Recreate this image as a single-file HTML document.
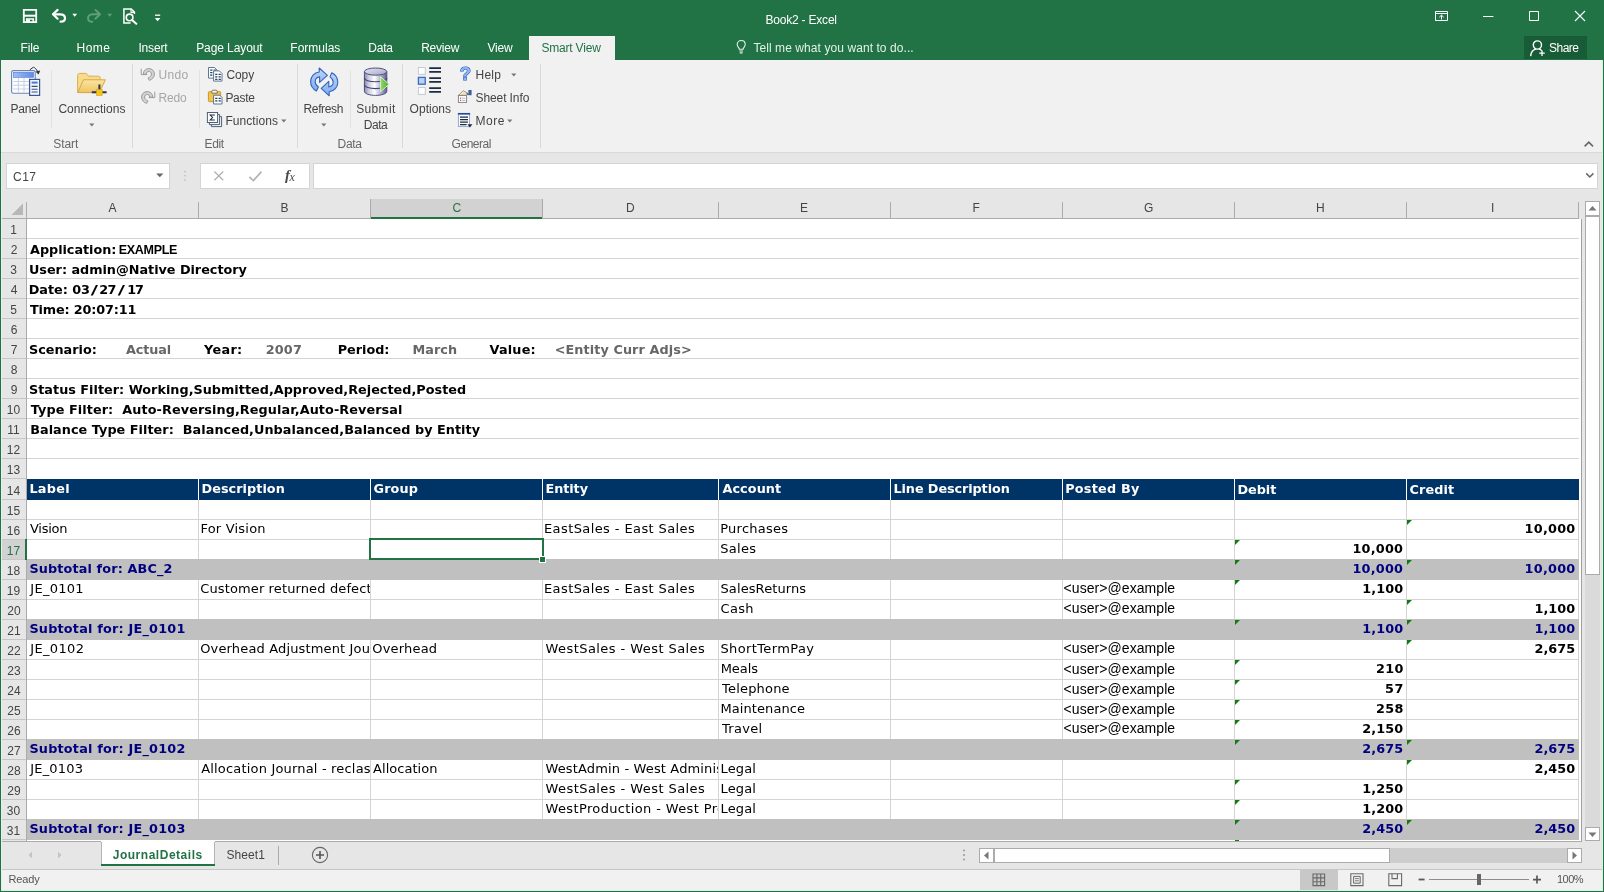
<!DOCTYPE html>
<html lang="en"><head><meta charset="utf-8"><title>Book2 - Excel</title>
<style>
html,body{margin:0;padding:0;background:#e6e6e6;}
#app{position:relative;width:1604px;height:892px;overflow:hidden;background:#e6e6e6;font-family:"Liberation Sans", sans-serif;will-change:transform;}
.r{position:absolute;}
.t{position:absolute;white-space:nowrap;line-height:20px;height:20px;color:#444;font-size:12px;}
.u{font-family:"Liberation Sans", sans-serif;}
.v{font-family:"DejaVu Sans", "Liberation Sans", sans-serif;}
.pre{white-space:pre;}
.tri{position:absolute;width:0;height:0;border-top:5px solid #107c10;border-right:5px solid transparent;}
</style></head>
<body><div id="app">
<div class="r" style="left:0px;top:0px;width:1604px;height:60px;background:#217346;"></div>
<span class="t u" style="left:765.50px;top:10.00px;color:#fff;letter-spacing:-0.208px;">Book2 - Excel</span>
<span class="t u" style="left:20.50px;top:38.00px;color:#fff;letter-spacing:-0.167px;">File</span>
<span class="t u" style="left:76.50px;top:38.00px;color:#fff;letter-spacing:0.500px;">Home</span>
<span class="t u" style="left:138.40px;top:38.00px;color:#fff;letter-spacing:-0.140px;">Insert</span>
<span class="t u" style="left:196.20px;top:38.00px;color:#fff;letter-spacing:-0.090px;">Page Layout</span>
<span class="t u" style="left:290.30px;top:38.00px;color:#fff;">Formulas</span>
<span class="t u" style="left:368.30px;top:38.00px;color:#fff;letter-spacing:-0.233px;">Data</span>
<span class="t u" style="left:421.20px;top:38.00px;color:#fff;letter-spacing:-0.240px;">Review</span>
<span class="t u" style="left:487.40px;top:38.00px;color:#fff;letter-spacing:-0.133px;">View</span>
<div class="r" style="left:529px;top:36px;width:86px;height:24px;background:#f1f1f1;"></div>
<span class="t u" style="left:541.40px;top:38.00px;color:#217346;letter-spacing:-0.189px;">Smart View</span>
<span class="t u" style="left:753.40px;top:38.00px;color:#e2f1e7;letter-spacing:0.076px;">Tell me what you want to do...</span>
<div class="r" style="left:1524px;top:36px;width:63px;height:23px;background:#185c37;"></div>
<span class="t u" style="left:1549.00px;top:38.00px;color:#fff;letter-spacing:-0.500px;">Share</span>
<svg class="r" style="left:22px;top:8px" width="16" height="16" viewBox="0 0 16 16" ><path d="M1.8 1.8H14.2V14.2H1.8Z" fill="none" stroke="#fff" stroke-width="1.8"/><path d="M1.8 7.7H14.2" stroke="#fff" stroke-width="2"/><path d="M4.7 14.2V11H11.3V14.2" fill="none" stroke="#fff" stroke-width="1.6"/><rect x="5" y="11.4" width="3" height="3" fill="#fff"/></svg>
<svg class="r" style="left:50px;top:7px" width="18" height="17" viewBox="0 0 18 17" ><path d="M3.4 7.3H10.2C13.6 7.3 15 9.3 15 11.2C15 13.2 13.4 14.7 10.6 14.7" fill="none" stroke="#fff" stroke-width="2.2" stroke-linecap="round"/><path d="M7.6 2.9L3 7.3L7.6 11.7" fill="none" stroke="#fff" stroke-width="2.2" stroke-linecap="round" stroke-linejoin="round"/></svg>
<svg class="r" style="left:72px;top:13px" width="6" height="5" viewBox="0 0 6 5" ><path d="M0.3 0.8H5.1L2.7 3.8Z" fill="#fff"/></svg>
<svg class="r" style="left:85px;top:7px" width="18" height="17" viewBox="0 0 18 17" ><path d="M14.6 7.3H7.8C4.4 7.3 3 9.3 3 11.2C3 13.2 4.6 14.7 7.4 14.7" fill="none" stroke="#5f9f7c" stroke-width="1.9" stroke-linecap="round"/><path d="M10.4 2.9L15 7.3L10.4 11.7" fill="none" stroke="#5f9f7c" stroke-width="1.9" stroke-linecap="round" stroke-linejoin="round"/></svg>
<svg class="r" style="left:107px;top:13px" width="6" height="5" viewBox="0 0 6 5" ><path d="M0.3 0.8H5.1L2.7 3.8Z" fill="#5f9f7c"/></svg>
<svg class="r" style="left:122px;top:7px" width="17" height="18" viewBox="0 0 17 18" ><path d="M8.6 15.9H1.9V1.9H9.2L12.4 5.1V7" fill="none" stroke="#fff" stroke-width="1.5"/><path d="M9 2V5.4H12.3" fill="none" stroke="#fff" stroke-width="1.1"/><circle cx="7.6" cy="10.4" r="3.3" fill="none" stroke="#fff" stroke-width="1.6"/><path d="M10 12.9L14.3 16.8" stroke="#fff" stroke-width="2" stroke-linecap="round"/></svg>
<svg class="r" style="left:154px;top:13px" width="8" height="10" viewBox="0 0 8 10" ><path d="M1 2.2H6.2" stroke="#fff" stroke-width="1.3"/><path d="M0.8 5H6.4L3.6 8.2Z" fill="#fff"/></svg>
<svg class="r" style="left:735px;top:39px" width="13" height="16" viewBox="0 0 13 16" ><path d="M4.3 10.3C4.3 8.6 2.2 7.9 2.2 5.4C2.2 3.1 4 1.5 6.2 1.5C8.4 1.5 10.2 3.1 10.2 5.4C10.2 7.9 8.1 8.6 8.1 10.3Z" fill="none" stroke="#e4f1e8" stroke-width="1.1"/><path d="M4.4 12H8M4.8 13.9H7.6" stroke="#e4f1e8" stroke-width="1.1"/></svg>
<svg class="r" style="left:1529px;top:39px" width="19" height="18" viewBox="0 0 19 18" ><circle cx="8.4" cy="6" r="4.1" fill="none" stroke="#fff" stroke-width="1.4"/><path d="M1.7 16.6C2.2 12.6 4.6 10.6 6.6 10.1" fill="none" stroke="#fff" stroke-width="1.4" stroke-linecap="round"/><path d="M10.3 10.1C11 10.3 11.7 10.7 12.3 11.2" fill="none" stroke="#fff" stroke-width="1.4" stroke-linecap="round"/><path d="M13 11.4V17M10.2 14.2H15.8" stroke="#fff" stroke-width="1.3"/></svg>
<svg class="r" style="left:1434px;top:10px" width="15" height="12" viewBox="0 0 15 12" ><path d="M1.5 1.5H13.5V10.5H1.5Z" fill="none" stroke="#fff" stroke-width="1"/><path d="M1.5 3.5H13.5" stroke="#fff" stroke-width="1"/><path d="M7.5 9.5V5.4M5.3 7.2L7.5 5.1L9.7 7.2" fill="none" stroke="#fff" stroke-width="1"/></svg>
<svg class="r" style="left:1483px;top:15px" width="11" height="3" viewBox="0 0 11 3" ><path d="M0 1.5H10.4" stroke="#fff" stroke-width="1"/></svg>
<svg class="r" style="left:1528px;top:10px" width="12" height="12" viewBox="0 0 12 12" ><path d="M1.5 1.5H10.5V10.5H1.5Z" fill="none" stroke="#fff" stroke-width="1"/></svg>
<svg class="r" style="left:1574px;top:10px" width="12" height="12" viewBox="0 0 12 12" ><path d="M1 1L11 11M11 1L1 11" stroke="#fff" stroke-width="1.1"/></svg>
<div class="r" style="left:1px;top:60px;width:1601px;height:92px;background:#f1f1f1;"></div>
<div class="r" style="left:1px;top:152px;width:1601px;height:1px;background:#d9d9d9;"></div>
<div class="r" style="left:132px;top:64px;width:1px;height:84px;background:#d8d8d8;"></div>
<div class="r" style="left:297px;top:64px;width:1px;height:84px;background:#d8d8d8;"></div>
<div class="r" style="left:402px;top:64px;width:1px;height:84px;background:#d8d8d8;"></div>
<div class="r" style="left:540px;top:64px;width:1px;height:84px;background:#d8d8d8;"></div>
<div class="r" style="left:51px;top:70px;width:1px;height:58px;background:#e3e3e3;"></div>
<div class="r" style="left:199px;top:70px;width:1px;height:58px;background:#e3e3e3;"></div>
<div class="r" style="left:350px;top:70px;width:1px;height:58px;background:#e3e3e3;"></div>
<span class="t u" style="left:10.50px;top:99.00px;letter-spacing:-0.200px;">Panel</span>
<span class="t u" style="left:58.40px;top:99.00px;letter-spacing:0.030px;">Connections</span>
<span class="t u" style="left:158.60px;top:65.00px;color:#a6a6a6;letter-spacing:0.267px;">Undo</span>
<span class="t u" style="left:158.60px;top:88.00px;color:#a6a6a6;letter-spacing:-0.200px;">Redo</span>
<span class="t u" style="left:226.40px;top:65.00px;letter-spacing:-0.067px;">Copy</span>
<span class="t u" style="left:225.40px;top:88.00px;letter-spacing:-0.300px;">Paste</span>
<span class="t u" style="left:225.40px;top:111.00px;letter-spacing:0.062px;">Functions</span>
<span class="t u" style="left:303.50px;top:99.00px;letter-spacing:-0.350px;">Refresh</span>
<span class="t u" style="left:356.20px;top:99.00px;letter-spacing:0.360px;">Submit</span>
<span class="t u" style="left:363.70px;top:115.00px;letter-spacing:-0.433px;">Data</span>
<span class="t u" style="left:409.60px;top:99.00px;letter-spacing:0.017px;">Options</span>
<span class="t u" style="left:475.60px;top:65.00px;letter-spacing:0.200px;">Help</span>
<span class="t u" style="left:475.60px;top:88.00px;letter-spacing:-0.111px;">Sheet Info</span>
<span class="t u" style="left:475.60px;top:111.00px;letter-spacing:0.467px;">More</span>
<span class="t u" style="left:53.20px;top:134.00px;color:#666;letter-spacing:-0.050px;">Start</span>
<span class="t u" style="left:204.60px;top:134.00px;color:#666;letter-spacing:-0.433px;">Edit</span>
<span class="t u" style="left:337.60px;top:134.00px;color:#666;letter-spacing:-0.367px;">Data</span>
<span class="t u" style="left:451.60px;top:134.00px;color:#666;letter-spacing:-0.483px;">General</span>
<svg class="r" style="left:9px;top:65px" width="34" height="33" viewBox="0 0 34 33" ><defs><linearGradient id="gbh" x1="0" y1="0" x2="1" y2="0"><stop offset="0" stop-color="#9dbdf6"/><stop offset="1" stop-color="#5f8be6"/></linearGradient><linearGradient id="gfo" x1="0" y1="0" x2="0" y2="1"><stop offset="0" stop-color="#fbe5a2"/><stop offset="1" stop-color="#efc462"/></linearGradient><linearGradient id="gcy" x1="0" y1="0" x2="1" y2="0"><stop offset="0" stop-color="#8585ad"/><stop offset="0.18" stop-color="#c9c9e0"/><stop offset="0.45" stop-color="#ffffff"/><stop offset="0.75" stop-color="#a9a9cc"/><stop offset="1" stop-color="#5e5e92"/></linearGradient><linearGradient id="gct" x1="0" y1="0" x2="1" y2="1"><stop offset="0" stop-color="#e6e6f2"/><stop offset="1" stop-color="#a6a6c8"/></linearGradient><linearGradient id="ggr" x1="0" y1="0" x2="1" y2="0"><stop offset="0" stop-color="#8fd66a"/><stop offset="1" stop-color="#4caf2c"/></linearGradient><linearGradient id="grf" x1="0" y1="0" x2="0" y2="1"><stop offset="0" stop-color="#bdd6fb"/><stop offset="1" stop-color="#7eaaf0"/></linearGradient></defs><rect x="2.6" y="5.6" width="23.6" height="22.6" rx="1.8" fill="#fdfdff" stroke="#6b84b4" stroke-width="1.1"/><rect x="4.4" y="7.3" width="20.2" height="5" fill="url(#gbh)" stroke="#4f78d4" stroke-width="0.6"/><path d="M4.2 16.5H25M4.2 20.2H25M4.2 24H25M9.4 13V27.6M15 13V27.6M20.4 13V27.6" stroke="#c3cde0" stroke-width="0.9" fill="none"/><rect x="20.6" y="14.4" width="10" height="16" fill="#f2f6ff" stroke="#3a5792" stroke-width="1.2"/><rect x="22.6" y="16.6" width="6" height="2" fill="#4a77d8"/><path d="M22.6 21.4H28.6M22.6 24.2H28.6M22.6 27H28.6" stroke="#3d4f74" stroke-width="1.1"/><path d="M20.8 4.8L24.4 2.2C25.6 2.4 27 3.6 29 7" fill="none" stroke="#27344d" stroke-width="1"/><path d="M26.4 6.6L31.2 5.6L29.6 9.6Z" fill="#27344d"/></svg>
<svg class="r" style="left:75px;top:70px" width="34" height="28" viewBox="0 0 34 28" ><path d="M2.6 5.4C2.6 4.2 3.4 3.4 4.6 3.4H10.6C11.6 3.4 12 3.8 12.6 4.8L13.4 6.2H23.4C24.6 6.2 25.2 6.8 25.2 8V22.4H2.6Z" fill="#f7dc8a" stroke="#dcae55" stroke-width="1"/><path d="M8.4 9.8H30.4L24.4 22.6H2.8Z" fill="url(#gfo)" stroke="#d9a748" stroke-width="1"/><path d="M24.4 14.4V20.6M16.8 22.3H31.6" stroke="#2b3647" stroke-width="2"/><rect x="21.6" y="19.6" width="5.6" height="6" fill="#f2c41c" stroke="#d8a810" stroke-width="0.6"/></svg>
<svg class="r" style="left:89px;top:123px" width="6" height="4" viewBox="0 0 6 4" ><path d="M0.2 0.4H5.4L2.8 3.4Z" fill="#777"/></svg>
<svg class="r" style="left:140px;top:67px" width="16" height="15" viewBox="0 0 16 15" ><path d="M1.2 1.8V7.6H7.2" fill="none" stroke="#9a9a9a" stroke-width="1"/><path d="M3.4 7.2C3.2 3.6 6 1.6 8.8 1.6C12 1.6 14.4 4 14.4 7C14.4 10.2 12 12.6 9.4 13.4L8 11C10 10.4 11.4 9 11.4 7C11.4 5.4 10.2 4.4 8.8 4.4C7.4 4.4 6.2 5.4 6.4 7.2Z" fill="#d4d4d4" stroke="#9a9a9a" stroke-width="1" stroke-linejoin="round"/></svg>
<svg class="r" style="left:140px;top:90px" width="16" height="15" viewBox="0 0 16 15" ><path d="M14.8 1.8V7.6H8.8" fill="none" stroke="#9a9a9a" stroke-width="1"/><path d="M12.6 7.2C12.8 3.6 10 1.6 7.2 1.6C4 1.6 1.6 4 1.6 7C1.6 10.2 4 12.6 6.6 13.4L8 11C6 10.4 4.6 9 4.6 7C4.6 5.4 5.8 4.4 7.2 4.4C8.6 4.4 9.8 5.4 9.6 7.2Z" fill="#d4d4d4" stroke="#9a9a9a" stroke-width="1" stroke-linejoin="round"/></svg>
<svg class="r" style="left:207px;top:66px" width="16" height="16" viewBox="0 0 16 16" ><path d="M1.5 1.5H7.5L10.1 4.1V12.1H1.5Z" fill="#fcfdff" stroke="#5d7893" stroke-width="1"/><path d="M3.2 4.2h2.2M6.6 4.2h2.2" stroke="#2d3c55" stroke-width="1.2"/><path d="M3.2 6.7h2.2M6.6 6.7h2.2" stroke="#2d3c55" stroke-width="1.2"/><path d="M3.2 9.2h2.2M6.6 9.2h2.2" stroke="#2d3c55" stroke-width="1.2"/><path d="M6.6 4.9H12.4L15 7.5V15.1H6.6Z" fill="#fcfdff" stroke="#5d7893" stroke-width="1"/><path d="M8.2 8.4h2.2M11.6 8.4h2.2" stroke="#2d3c55" stroke-width="1.2"/><path d="M8.2 10.9h2.2M11.6 10.9h2.2" stroke="#2d3c55" stroke-width="1.2"/><path d="M8.2 13.4h2.2M11.6 13.4h2.2" stroke="#2d3c55" stroke-width="1.2"/></svg>
<svg class="r" style="left:207px;top:89px" width="16" height="16" viewBox="0 0 16 16" ><rect x="1.4" y="2.6" width="12.2" height="10" rx="1" fill="#f3c54a" stroke="#c9962a" stroke-width="1"/><path d="M4.8 4.2V2.4C4.8 1.6 5.4 1.2 6 1.2H9C9.6 1.2 10.2 1.6 10.2 2.4V4.2Z" fill="#f4f4f4" stroke="#7a6a45" stroke-width="0.9"/><path d="M6.6 6.2H12.8L15 8.4V15H6.6Z" fill="#fcfdff" stroke="#5d7893" stroke-width="1"/><path d="M8.2 9.4h2.2M11.6 9.4h2.2" stroke="#2d3c55" stroke-width="1.2"/><path d="M8.2 11.9h2.2M11.6 11.9h2.2" stroke="#2d3c55" stroke-width="1.2"/></svg>
<svg class="r" style="left:206px;top:111px" width="17" height="17" viewBox="0 0 17 17" ><path d="M5.4 13.4V15.6H15.6V5.6H13.6" fill="#f4f6fa" stroke="#4f6076" stroke-width="1"/><path d="M3.4 11.4V13.6H13.6V3.6H11.6" fill="#f4f6fa" stroke="#4f6076" stroke-width="1"/><rect x="1.4" y="1.5" width="10.2" height="10" fill="#fcfdff" stroke="#4f6076" stroke-width="1"/><path d="M8.8 4H4.2L6.6 6.5L4.2 9H8.8" fill="none" stroke="#1f2a3c" stroke-width="1.05"/></svg>
<svg class="r" style="left:281px;top:118.6px" width="6" height="4" viewBox="0 0 6 4" ><path d="M0.2 0.4H5.4L2.8 3.4Z" fill="#777"/></svg>
<svg class="r" style="left:308px;top:66px" width="32" height="32" viewBox="0 0 32 32" ><path d="M8.4 25C4.6 23 2.6 19.4 2.6 15.6C2.6 10.6 6.2 6.6 11.2 6V2L19.4 9.4L11.6 16.4V10.9C9 11.3 7.2 13.2 7.2 15.7C7.2 17.6 8.2 19.4 10.4 20.9Z" fill="url(#grf)" stroke="#3565b8" stroke-width="1.1" stroke-linejoin="round"/><path d="M23.8 6.8C27.6 8.8 29.8 12.4 29.8 16.2C29.8 21.2 26.2 25.2 21.2 25.8V29.8L13.2 22.4L20.8 15.4V20.9C23.4 20.5 25.2 18.6 25.2 16.1C25.2 14.2 24.2 12.4 22 10.9Z" fill="url(#grf)" stroke="#3565b8" stroke-width="1.1" stroke-linejoin="round"/></svg>
<svg class="r" style="left:321px;top:123px" width="6" height="4" viewBox="0 0 6 4" ><path d="M0.2 0.4H5.4L2.8 3.4Z" fill="#777"/></svg>
<svg class="r" style="left:362px;top:66px" width="30" height="32" viewBox="0 0 30 32" ><path d="M2.4 5.6V25.4C2.4 27.6 7.4 29.4 13.6 29.4C19.8 29.4 24.8 27.6 24.8 25.4V5.6Z" fill="url(#gcy)" stroke="#50507e" stroke-width="1"/><path d="M2.4 12C2.4 14.2 7.4 15.8 13.6 15.8C19.8 15.8 24.8 14.2 24.8 12M2.4 18.8C2.4 21 7.4 22.6 13.6 22.6C19.8 22.6 24.8 21 24.8 18.8" fill="none" stroke="#44446e" stroke-width="1.1"/><ellipse cx="13.6" cy="5.6" rx="11.2" ry="3.6" fill="url(#gct)" stroke="#50507e" stroke-width="1"/><path d="M18.6 10.8L27 18.2L18.6 25.8Z" fill="url(#ggr)" stroke="#d4f2c0" stroke-width="1" stroke-linejoin="round"/></svg>
<svg class="r" style="left:416px;top:65px" width="28" height="31" viewBox="0 0 28 31" ><rect x="3" y="3.1" width="7" height="7" fill="#cfcfcf" opacity="0.6"/><rect x="2.4" y="2.5" width="6.8" height="6.8" fill="#fff" stroke="#c4c8ce" stroke-width="0.9"/><path d="M13.2 3.2H25M13.2 6.9H25" stroke="#1d2c42" stroke-width="1.8"/><rect x="2.4" y="12.4" width="6.8" height="6.8" fill="#b9d1f2" stroke="#3a6cc0" stroke-width="1.3"/><path d="M13.2 13.1H25M13.2 16.8H25" stroke="#1d2c42" stroke-width="1.8"/><rect x="3" y="23.1" width="7" height="7" fill="#cfcfcf" opacity="0.6"/><rect x="2.4" y="22.5" width="6.8" height="6.8" fill="#fff" stroke="#c4c8ce" stroke-width="0.9"/><path d="M13.2 23.2H25M13.2 26.9H25" stroke="#1d2c42" stroke-width="1.8"/></svg>
<svg class="r" style="left:457px;top:64px" width="17" height="19" viewBox="0 0 17 19"><text x="8.4" y="16.2" text-anchor="middle" font-family="Liberation Sans, sans-serif" font-weight="bold" font-size="18.5" fill="#8fb6f2" stroke="#2a58b8" stroke-width="1.1" paint-order="stroke">?</text></svg>
<svg class="r" style="left:511px;top:72.6px" width="6" height="4" viewBox="0 0 6 4" ><path d="M0.2 0.4H5.4L2.8 3.4Z" fill="#777"/></svg>
<svg class="r" style="left:457px;top:89px" width="16" height="15" viewBox="0 0 16 15" ><path d="M1.4 6.4L6.2 1.6L11 4.4L9.4 6.4Z" fill="#f7e3b8" stroke="#8a8a8a" stroke-width="0.8"/><rect x="1.4" y="6.4" width="8.2" height="7" fill="#fdfdfd" stroke="#7d7d7d" stroke-width="0.9"/><path d="M3 9.2h1.2M3 11.4h1.2" stroke="#e0475c" stroke-width="1.2"/><path d="M5.2 9.2H8.4M5.2 11.4H8.4" stroke="#9db8e6" stroke-width="1"/><rect x="11.4" y="1" width="3.2" height="5.2" fill="#3e5f94"/><path d="M9.6 4.2L11.6 5.8" stroke="#3e5f94" stroke-width="1.2"/></svg>
<svg class="r" style="left:457px;top:112px" width="16" height="16" viewBox="0 0 16 16" ><rect x="1.4" y="1.6" width="11.2" height="13" fill="#fbfcff" stroke="#8ea2c6" stroke-width="0.9"/><path d="M0.9 1.8H13.1" stroke="#2a489e" stroke-width="1.7"/><path d="M3 5.2H11M3 7.7H11M3 10.2H11M3 12.7H9.6" stroke="#1d2c42" stroke-width="1.2"/><path d="M10.4 12.2H15.4L12.9 15.4Z" fill="#1d2c42"/></svg>
<svg class="r" style="left:507px;top:118.6px" width="6" height="4" viewBox="0 0 6 4" ><path d="M0.2 0.4H5.4L2.8 3.4Z" fill="#777"/></svg>
<svg class="r" style="left:1583px;top:140px" width="12" height="8" viewBox="0 0 12 8" ><path d="M1.6 6.4L5.8 2.2L10 6.4" fill="none" stroke="#666" stroke-width="1.6"/></svg>
<div class="r" style="left:1px;top:153px;width:1601px;height:47px;background:#e6e6e6;"></div>
<div class="r" style="left:6px;top:163px;width:164px;height:26px;background:#fff;border:1px solid #d4d4d4;box-sizing:border-box;"></div>
<span class="t u" style="left:13.00px;top:167.00px;letter-spacing:0.500px;">C17</span>
<div class="r" style="left:200px;top:163px;width:110px;height:26px;background:#fff;border:1px solid #d4d4d4;box-sizing:border-box;"></div>
<div class="r" style="left:313px;top:163px;width:1285px;height:26px;background:#fff;border:1px solid #d4d4d4;box-sizing:border-box;"></div>
<svg class="r" style="left:156px;top:173px" width="8" height="5" viewBox="0 0 8 5" ><path d="M0.2 0.4H7.4L3.8 4.2Z" fill="#666"/></svg>
<svg class="r" style="left:183px;top:170px" width="4" height="12" viewBox="0 0 4 12" ><circle cx="2" cy="1.6" r="0.8" fill="#b5b5b5"/><circle cx="2" cy="5.8" r="0.8" fill="#b5b5b5"/><circle cx="2" cy="10" r="0.8" fill="#b5b5b5"/></svg>
<svg class="r" style="left:213px;top:170px" width="12" height="12" viewBox="0 0 12 12" ><path d="M1.4 1.6L10.2 10.2M10.2 1.6L1.4 10.2" stroke="#b3b3b3" stroke-width="1.4"/></svg>
<svg class="r" style="left:248px;top:170px" width="15" height="13" viewBox="0 0 15 13" ><path d="M1.4 6.8L5.4 10.6L13.4 1.6" fill="none" stroke="#b3b3b3" stroke-width="1.7"/></svg>
<span class="r" style="left:285px;top:166px;font:italic bold 15px/18px 'Liberation Serif',serif;color:#4a4a4a;letter-spacing:-0.3px">f<span style="font-size:12px;font-weight:normal;position:relative;top:1px;left:-0.3px">x</span></span>
<svg class="r" style="left:1585px;top:172px" width="10" height="7" viewBox="0 0 10 7" ><path d="M1.2 1.4L4.8 5L8.4 1.4" fill="none" stroke="#666" stroke-width="1.5"/></svg>
<div class="r" style="left:1px;top:200px;width:1601px;height:19px;background:#e6e6e6;"></div>
<div class="r" style="left:371px;top:199px;width:171px;height:18px;background:#d2d2d2;"></div>
<div class="r" style="left:370px;top:199px;width:1px;height:19px;background:#ababab;"></div>
<div class="r" style="left:542px;top:199px;width:1px;height:19px;background:#ababab;"></div>
<div class="r" style="left:371px;top:217px;width:172px;height:2px;background:#217346;"></div>
<span class="t u" style="left:108.50px;top:198.00px;">A</span>
<span class="t u" style="left:280.50px;top:198.00px;">B</span>
<span class="t u" style="left:452.50px;top:198.00px;color:#217346;">C</span>
<span class="t u" style="left:626.00px;top:198.00px;">D</span>
<span class="t u" style="left:800.00px;top:198.00px;">E</span>
<span class="t u" style="left:972.50px;top:198.00px;">F</span>
<span class="t u" style="left:1144.00px;top:198.00px;">G</span>
<span class="t u" style="left:1316.00px;top:198.00px;">H</span>
<span class="t u" style="left:1491.00px;top:198.00px;">I</span>
<div class="r" style="left:26px;top:202px;width:1px;height:17px;background:#ababab;"></div>
<div class="r" style="left:198px;top:202px;width:1px;height:17px;background:#ababab;"></div>
<div class="r" style="left:370px;top:202px;width:1px;height:17px;background:#ababab;"></div>
<div class="r" style="left:542px;top:202px;width:1px;height:17px;background:#ababab;"></div>
<div class="r" style="left:718px;top:202px;width:1px;height:17px;background:#ababab;"></div>
<div class="r" style="left:890px;top:202px;width:1px;height:17px;background:#ababab;"></div>
<div class="r" style="left:1062px;top:202px;width:1px;height:17px;background:#ababab;"></div>
<div class="r" style="left:1234px;top:202px;width:1px;height:17px;background:#ababab;"></div>
<div class="r" style="left:1406px;top:202px;width:1px;height:17px;background:#ababab;"></div>
<div class="r" style="left:1578px;top:202px;width:1px;height:17px;background:#ababab;"></div>
<div class="r" style="left:1px;top:218px;width:26px;height:1px;background:#ababab;"></div>
<div class="r" style="left:27px;top:218px;width:344px;height:1px;background:#ababab;"></div>
<div class="r" style="left:543px;top:218px;width:1036px;height:1px;background:#ababab;"></div>
<svg class="r" style="left:11px;top:203px" width="13" height="13"><path d="M12 0.5V12H0.5Z" fill="#b7b7b7"/></svg>
<div class="r" style="left:27px;top:219px;width:1554px;height:622px;background:#fff;"></div>
<div class="r" style="left:1px;top:219px;width:25px;height:622px;background:#e6e6e6;"></div>
<div class="r" style="left:26px;top:219px;width:1px;height:622px;background:#ababab;"></div>
<div class="r" style="left:27px;top:238px;width:1554px;height:1px;background:#d4d4d4;"></div>
<div class="r" style="left:1px;top:238px;width:25px;height:1px;background:#c6c6c6;"></div>
<div class="r" style="left:27px;top:258px;width:1554px;height:1px;background:#d4d4d4;"></div>
<div class="r" style="left:1px;top:258px;width:25px;height:1px;background:#c6c6c6;"></div>
<div class="r" style="left:27px;top:278px;width:1554px;height:1px;background:#d4d4d4;"></div>
<div class="r" style="left:1px;top:278px;width:25px;height:1px;background:#c6c6c6;"></div>
<div class="r" style="left:27px;top:298px;width:1554px;height:1px;background:#d4d4d4;"></div>
<div class="r" style="left:1px;top:298px;width:25px;height:1px;background:#c6c6c6;"></div>
<div class="r" style="left:27px;top:318px;width:1554px;height:1px;background:#d4d4d4;"></div>
<div class="r" style="left:1px;top:318px;width:25px;height:1px;background:#c6c6c6;"></div>
<div class="r" style="left:27px;top:338px;width:1554px;height:1px;background:#d4d4d4;"></div>
<div class="r" style="left:1px;top:338px;width:25px;height:1px;background:#c6c6c6;"></div>
<div class="r" style="left:27px;top:358px;width:1554px;height:1px;background:#d4d4d4;"></div>
<div class="r" style="left:1px;top:358px;width:25px;height:1px;background:#c6c6c6;"></div>
<div class="r" style="left:27px;top:378px;width:1554px;height:1px;background:#d4d4d4;"></div>
<div class="r" style="left:1px;top:378px;width:25px;height:1px;background:#c6c6c6;"></div>
<div class="r" style="left:27px;top:398px;width:1554px;height:1px;background:#d4d4d4;"></div>
<div class="r" style="left:1px;top:398px;width:25px;height:1px;background:#c6c6c6;"></div>
<div class="r" style="left:27px;top:418px;width:1554px;height:1px;background:#d4d4d4;"></div>
<div class="r" style="left:1px;top:418px;width:25px;height:1px;background:#c6c6c6;"></div>
<div class="r" style="left:27px;top:438px;width:1554px;height:1px;background:#d4d4d4;"></div>
<div class="r" style="left:1px;top:438px;width:25px;height:1px;background:#c6c6c6;"></div>
<div class="r" style="left:27px;top:458px;width:1554px;height:1px;background:#d4d4d4;"></div>
<div class="r" style="left:1px;top:458px;width:25px;height:1px;background:#c6c6c6;"></div>
<div class="r" style="left:27px;top:478px;width:1554px;height:1px;background:#d4d4d4;"></div>
<div class="r" style="left:1px;top:478px;width:25px;height:1px;background:#c6c6c6;"></div>
<div class="r" style="left:27px;top:499px;width:1554px;height:1px;background:#d4d4d4;"></div>
<div class="r" style="left:1px;top:499px;width:25px;height:1px;background:#c6c6c6;"></div>
<div class="r" style="left:27px;top:519px;width:1554px;height:1px;background:#d4d4d4;"></div>
<div class="r" style="left:1px;top:519px;width:25px;height:1px;background:#c6c6c6;"></div>
<div class="r" style="left:27px;top:539px;width:1554px;height:1px;background:#d4d4d4;"></div>
<div class="r" style="left:1px;top:539px;width:25px;height:1px;background:#c6c6c6;"></div>
<div class="r" style="left:27px;top:559px;width:1554px;height:1px;background:#d4d4d4;"></div>
<div class="r" style="left:1px;top:559px;width:25px;height:1px;background:#c6c6c6;"></div>
<div class="r" style="left:27px;top:579px;width:1554px;height:1px;background:#d4d4d4;"></div>
<div class="r" style="left:1px;top:579px;width:25px;height:1px;background:#c6c6c6;"></div>
<div class="r" style="left:27px;top:599px;width:1554px;height:1px;background:#d4d4d4;"></div>
<div class="r" style="left:1px;top:599px;width:25px;height:1px;background:#c6c6c6;"></div>
<div class="r" style="left:27px;top:619px;width:1554px;height:1px;background:#d4d4d4;"></div>
<div class="r" style="left:1px;top:619px;width:25px;height:1px;background:#c6c6c6;"></div>
<div class="r" style="left:27px;top:639px;width:1554px;height:1px;background:#d4d4d4;"></div>
<div class="r" style="left:1px;top:639px;width:25px;height:1px;background:#c6c6c6;"></div>
<div class="r" style="left:27px;top:659px;width:1554px;height:1px;background:#d4d4d4;"></div>
<div class="r" style="left:1px;top:659px;width:25px;height:1px;background:#c6c6c6;"></div>
<div class="r" style="left:27px;top:679px;width:1554px;height:1px;background:#d4d4d4;"></div>
<div class="r" style="left:1px;top:679px;width:25px;height:1px;background:#c6c6c6;"></div>
<div class="r" style="left:27px;top:699px;width:1554px;height:1px;background:#d4d4d4;"></div>
<div class="r" style="left:1px;top:699px;width:25px;height:1px;background:#c6c6c6;"></div>
<div class="r" style="left:27px;top:719px;width:1554px;height:1px;background:#d4d4d4;"></div>
<div class="r" style="left:1px;top:719px;width:25px;height:1px;background:#c6c6c6;"></div>
<div class="r" style="left:27px;top:739px;width:1554px;height:1px;background:#d4d4d4;"></div>
<div class="r" style="left:1px;top:739px;width:25px;height:1px;background:#c6c6c6;"></div>
<div class="r" style="left:27px;top:759px;width:1554px;height:1px;background:#d4d4d4;"></div>
<div class="r" style="left:1px;top:759px;width:25px;height:1px;background:#c6c6c6;"></div>
<div class="r" style="left:27px;top:779px;width:1554px;height:1px;background:#d4d4d4;"></div>
<div class="r" style="left:1px;top:779px;width:25px;height:1px;background:#c6c6c6;"></div>
<div class="r" style="left:27px;top:799px;width:1554px;height:1px;background:#d4d4d4;"></div>
<div class="r" style="left:1px;top:799px;width:25px;height:1px;background:#c6c6c6;"></div>
<div class="r" style="left:27px;top:819px;width:1554px;height:1px;background:#d4d4d4;"></div>
<div class="r" style="left:1px;top:819px;width:25px;height:1px;background:#c6c6c6;"></div>
<div class="r" style="left:27px;top:839px;width:1554px;height:1px;background:#d4d4d4;"></div>
<div class="r" style="left:1px;top:839px;width:25px;height:1px;background:#c6c6c6;"></div>
<div class="r" style="left:198px;top:479px;width:1px;height:361px;background:#d4d4d4;"></div>
<div class="r" style="left:370px;top:479px;width:1px;height:361px;background:#d4d4d4;"></div>
<div class="r" style="left:542px;top:479px;width:1px;height:361px;background:#d4d4d4;"></div>
<div class="r" style="left:718px;top:479px;width:1px;height:361px;background:#d4d4d4;"></div>
<div class="r" style="left:890px;top:479px;width:1px;height:361px;background:#d4d4d4;"></div>
<div class="r" style="left:1062px;top:479px;width:1px;height:361px;background:#d4d4d4;"></div>
<div class="r" style="left:1234px;top:479px;width:1px;height:361px;background:#d4d4d4;"></div>
<div class="r" style="left:1406px;top:479px;width:1px;height:361px;background:#d4d4d4;"></div>
<div class="r" style="left:1578px;top:479px;width:1px;height:361px;background:#d4d4d4;"></div>
<div class="r" style="left:27px;top:478px;width:1552px;height:1px;background:#fff;"></div>
<div class="r" style="left:27px;top:479px;width:1552px;height:21px;background:#003366;"></div>
<div class="r" style="left:198px;top:479px;width:1px;height:21px;background:#fff;"></div>
<div class="r" style="left:370px;top:479px;width:1px;height:21px;background:#fff;"></div>
<div class="r" style="left:542px;top:479px;width:1px;height:21px;background:#fff;"></div>
<div class="r" style="left:718px;top:479px;width:1px;height:21px;background:#fff;"></div>
<div class="r" style="left:890px;top:479px;width:1px;height:21px;background:#fff;"></div>
<div class="r" style="left:1062px;top:479px;width:1px;height:21px;background:#fff;"></div>
<div class="r" style="left:1234px;top:479px;width:1px;height:21px;background:#fff;"></div>
<div class="r" style="left:1406px;top:479px;width:1px;height:21px;background:#fff;"></div>
<div class="r" style="left:27px;top:559px;width:1552px;height:21px;background:#c0c0c0;"></div>
<div class="r" style="left:27px;top:619px;width:1552px;height:21px;background:#c0c0c0;"></div>
<div class="r" style="left:27px;top:739px;width:1552px;height:21px;background:#c0c0c0;"></div>
<div class="r" style="left:27px;top:819px;width:1552px;height:21px;background:#c0c0c0;"></div>
<div class="r" style="left:1px;top:540px;width:25px;height:19px;background:#d2d2d2;"></div>
<div class="r" style="left:25px;top:539px;width:2px;height:21px;background:#217346;"></div>
<span class="t u" style="left:10.30px;top:220.00px;">1</span>
<span class="t u" style="left:10.80px;top:240.00px;">2</span>
<span class="t u" style="left:10.30px;top:260.00px;">3</span>
<span class="t u" style="left:10.80px;top:280.00px;">4</span>
<span class="t u" style="left:10.30px;top:300.00px;">5</span>
<span class="t u" style="left:10.80px;top:320.00px;">6</span>
<span class="t u" style="left:10.80px;top:340.00px;">7</span>
<span class="t u" style="left:10.80px;top:360.00px;">8</span>
<span class="t u" style="left:10.80px;top:380.00px;">9</span>
<span class="t u" style="left:6.80px;top:400.00px;">10</span>
<span class="t u" style="left:7.30px;top:420.00px;">11</span>
<span class="t u" style="left:6.80px;top:440.00px;">12</span>
<span class="t u" style="left:6.80px;top:460.00px;">13</span>
<span class="t u" style="left:6.80px;top:481.00px;">14</span>
<span class="t u" style="left:6.80px;top:501.00px;">15</span>
<span class="t u" style="left:6.80px;top:521.00px;">16</span>
<span class="t u" style="left:6.80px;top:541.00px;color:#217346;">17</span>
<span class="t u" style="left:6.80px;top:561.00px;">18</span>
<span class="t u" style="left:6.80px;top:581.00px;">19</span>
<span class="t u" style="left:7.30px;top:601.00px;">20</span>
<span class="t u" style="left:7.30px;top:621.00px;">21</span>
<span class="t u" style="left:7.30px;top:641.00px;">22</span>
<span class="t u" style="left:7.30px;top:661.00px;">23</span>
<span class="t u" style="left:7.30px;top:681.00px;">24</span>
<span class="t u" style="left:7.30px;top:701.00px;">25</span>
<span class="t u" style="left:7.30px;top:721.00px;">26</span>
<span class="t u" style="left:7.30px;top:741.00px;">27</span>
<span class="t u" style="left:7.30px;top:761.00px;">28</span>
<span class="t u" style="left:7.30px;top:781.00px;">29</span>
<span class="t u" style="left:6.80px;top:801.00px;">30</span>
<span class="t u" style="left:6.80px;top:821.00px;">31</span>
<!--CELLS-->
<span class="t v" style="left:30.00px;top:240.00px;font-size:12.8px;color:#000;font-weight:bold;letter-spacing:-0.027px;">Application:</span>
<span class="t u" style="left:118.70px;top:240.00px;font-size:12.5px;color:#000;font-weight:bold;letter-spacing:-0.283px;">EXAMPLE</span>
<span class="t v" style="left:29.00px;top:260.00px;font-size:12.8px;color:#000;font-weight:bold;letter-spacing:-0.022px;">User: admin@Native Directory</span>
<span><span class="t v" style="left:28.70px;top:280.00px;font-size:12.8px;color:#000;font-weight:bold;letter-spacing:-0.029px;">Date: 03</span><span class="t v" style="left:92.15px;top:280.00px;font-size:12.8px;color:#000;font-weight:bold;transform:scaleX(1.55);">/</span><span class="t v" style="left:99.30px;top:280.00px;font-size:12.8px;color:#000;font-weight:bold;letter-spacing:-0.700px;">27</span><span class="t v" style="left:119.20px;top:280.00px;font-size:12.8px;color:#000;font-weight:bold;transform:scaleX(1.55);">/</span><span class="t v" style="left:127.20px;top:280.00px;font-size:12.8px;color:#000;font-weight:bold;letter-spacing:-1.200px;">17</span></span>
<span class="t v" style="left:30.00px;top:300.00px;font-size:12.8px;color:#000;font-weight:bold;letter-spacing:-0.154px;">Time: 20:07:11</span>
<span class="t v" style="left:29.00px;top:340.00px;font-size:12.8px;color:#000;font-weight:bold;">Scenario:</span>
<span class="t v" style="left:126.00px;top:340.00px;font-size:12.8px;color:#666;font-weight:bold;letter-spacing:-0.140px;">Actual</span>
<span class="t v" style="left:204.00px;top:340.00px;font-size:12.8px;color:#000;font-weight:bold;letter-spacing:0.350px;">Year:</span>
<span class="t v" style="left:265.80px;top:340.00px;font-size:12.8px;color:#666;font-weight:bold;letter-spacing:0.133px;">2007</span>
<span class="t v" style="left:337.70px;top:340.00px;font-size:12.8px;color:#000;font-weight:bold;letter-spacing:-0.017px;">Period:</span>
<span class="t v" style="left:412.50px;top:340.00px;font-size:12.8px;color:#666;font-weight:bold;letter-spacing:0.050px;">March</span>
<span class="t v" style="left:489.60px;top:340.00px;font-size:12.8px;color:#000;font-weight:bold;letter-spacing:0.180px;">Value:</span>
<span class="t v" style="left:554.70px;top:340.00px;font-size:12.8px;color:#666;font-weight:bold;letter-spacing:0.094px;">&lt;Entity Curr Adjs&gt;</span>
<span class="t v" style="left:29.00px;top:380.00px;font-size:12.8px;color:#000;font-weight:bold;letter-spacing:0.011px;">Status Filter: Working,Submitted,Approved,Rejected,Posted</span>
<span class="t v pre" style="left:30.70px;top:400.00px;font-size:12.8px;color:#000;font-weight:bold;letter-spacing:0.084px;">Type Filter:  Auto-Reversing,Regular,Auto-Reversal</span>
<span class="t v pre" style="left:30.20px;top:420.00px;font-size:12.8px;color:#000;font-weight:bold;letter-spacing:0.041px;">Balance Type Filter:  Balanced,Unbalanced,Balanced by Entity</span>
<span class="t v" style="left:29.40px;top:479.00px;font-size:12.8px;color:#fff;font-weight:bold;letter-spacing:0.300px;">Label</span>
<span class="t v" style="left:201.50px;top:479.00px;font-size:12.8px;color:#fff;font-weight:bold;letter-spacing:0.050px;">Description</span>
<span class="t v" style="left:373.50px;top:479.00px;font-size:12.8px;color:#fff;font-weight:bold;letter-spacing:0.125px;">Group</span>
<span class="t v" style="left:545.50px;top:479.00px;font-size:12.8px;color:#fff;font-weight:bold;letter-spacing:-0.060px;">Entity</span>
<span class="t v" style="left:722.40px;top:479.00px;font-size:12.8px;color:#fff;font-weight:bold;letter-spacing:0.100px;">Account</span>
<span class="t v" style="left:893.50px;top:479.00px;font-size:12.8px;color:#fff;font-weight:bold;letter-spacing:-0.087px;">Line Description</span>
<span class="t v" style="left:1065.20px;top:479.00px;font-size:12.8px;color:#fff;font-weight:bold;letter-spacing:0.225px;">Posted By</span>
<span class="t v" style="left:1237.40px;top:480.00px;font-size:12.8px;color:#fff;font-weight:bold;letter-spacing:-0.025px;">Debit</span>
<span class="t v" style="left:1409.50px;top:480.00px;font-size:12.8px;color:#fff;font-weight:bold;letter-spacing:0.100px;">Credit</span>
<span class="t v" style="left:30.00px;top:519.00px;font-size:13px;color:#000;letter-spacing:-0.280px;">Vision</span>
<span class="t v" style="left:200.50px;top:519.00px;font-size:13px;color:#000;letter-spacing:0.200px;">For Vision</span>
<span class="t v" style="left:544.00px;top:519.00px;font-size:13px;color:#000;letter-spacing:0.400px;">EastSales - East Sales</span>
<span class="t v" style="left:720.20px;top:519.00px;font-size:13px;color:#000;letter-spacing:0.262px;">Purchases</span>
<span class="t v" style="left:1524.60px;top:519.00px;font-size:12.8px;color:#000;font-weight:bold;letter-spacing:0.240px;">10,000</span>
<i class="tri" style="left:1407px;top:520px"></i>
<span class="t v" style="left:720.20px;top:539.00px;font-size:13px;color:#000;letter-spacing:0.300px;">Sales</span>
<span class="t v" style="left:1352.40px;top:539.00px;font-size:12.8px;color:#000;font-weight:bold;letter-spacing:0.240px;">10,000</span>
<i class="tri" style="left:1235px;top:540px"></i>
<span class="t v" style="left:29.40px;top:559.00px;font-size:12.8px;color:#000080;font-weight:bold;letter-spacing:0.133px;">Subtotal for: ABC_2</span>
<span class="t v" style="left:1352.40px;top:559.00px;font-size:12.8px;color:#000080;font-weight:bold;letter-spacing:0.240px;">10,000</span>
<i class="tri" style="left:1235px;top:560px"></i>
<span class="t v" style="left:1524.60px;top:559.00px;font-size:12.8px;color:#000080;font-weight:bold;letter-spacing:0.240px;">10,000</span>
<i class="tri" style="left:1407px;top:560px"></i>
<span class="t v" style="left:30.30px;top:579.00px;font-size:13px;color:#000;letter-spacing:0.267px;">JE_0101</span>
<span class="t v" style="left:200.20px;top:579.00px;font-size:13px;color:#000;letter-spacing:0.127px;width:169.80px;overflow:hidden;">Customer returned defective</span>
<span class="t v" style="left:544.00px;top:579.00px;font-size:13px;color:#000;letter-spacing:0.400px;">EastSales - East Sales</span>
<span class="t v" style="left:720.50px;top:579.00px;font-size:13px;color:#000;letter-spacing:0.100px;">SalesReturns</span>
<span class="t u" style="left:1063.60px;top:578.00px;font-size:14px;color:#000;letter-spacing:0.062px;">&lt;user&gt;@example</span>
<span class="t v" style="left:1362.20px;top:579.00px;font-size:12.8px;color:#000;font-weight:bold;letter-spacing:0.100px;">1,100</span>
<i class="tri" style="left:1235px;top:580px"></i>
<span class="t v" style="left:720.50px;top:599.00px;font-size:13px;color:#000;letter-spacing:0.333px;">Cash</span>
<span class="t u" style="left:1063.60px;top:598.00px;font-size:14px;color:#000;letter-spacing:0.062px;">&lt;user&gt;@example</span>
<span class="t v" style="left:1534.40px;top:599.00px;font-size:12.8px;color:#000;font-weight:bold;letter-spacing:0.100px;">1,100</span>
<i class="tri" style="left:1407px;top:600px"></i>
<span class="t v" style="left:29.40px;top:619.00px;font-size:12.8px;color:#000080;font-weight:bold;letter-spacing:0.210px;">Subtotal for: JE_0101</span>
<span class="t v" style="left:1362.20px;top:619.00px;font-size:12.8px;color:#000080;font-weight:bold;letter-spacing:0.100px;">1,100</span>
<i class="tri" style="left:1235px;top:620px"></i>
<span class="t v" style="left:1534.40px;top:619.00px;font-size:12.8px;color:#000080;font-weight:bold;letter-spacing:0.100px;">1,100</span>
<i class="tri" style="left:1407px;top:620px"></i>
<span class="t v" style="left:30.30px;top:639.00px;font-size:13px;color:#000;letter-spacing:0.333px;">JE_0102</span>
<span class="t v" style="left:200.20px;top:639.00px;font-size:13px;color:#000;letter-spacing:0.152px;width:169.80px;overflow:hidden;">Overhead Adjustment Journal</span>
<span class="t v" style="left:372.30px;top:639.00px;font-size:13px;color:#000;letter-spacing:0.186px;">Overhead</span>
<span class="t v" style="left:545.50px;top:639.00px;font-size:13px;color:#000;letter-spacing:0.433px;">WestSales - West Sales</span>
<span class="t v" style="left:720.50px;top:639.00px;font-size:13px;color:#000;letter-spacing:0.373px;">ShortTermPay</span>
<span class="t u" style="left:1063.60px;top:638.00px;font-size:14px;color:#000;letter-spacing:0.062px;">&lt;user&gt;@example</span>
<span class="t v" style="left:1534.40px;top:639.00px;font-size:12.8px;color:#000;font-weight:bold;letter-spacing:0.100px;">2,675</span>
<i class="tri" style="left:1407px;top:640px"></i>
<span class="t v" style="left:720.70px;top:659.00px;font-size:13px;color:#000;letter-spacing:-0.050px;">Meals</span>
<span class="t u" style="left:1063.60px;top:659.00px;font-size:14px;color:#000;letter-spacing:0.062px;">&lt;user&gt;@example</span>
<span class="t v" style="left:1375.90px;top:659.00px;font-size:12.8px;color:#000;font-weight:bold;letter-spacing:0.350px;">210</span>
<i class="tri" style="left:1235px;top:660px"></i>
<span class="t v" style="left:722.00px;top:679.00px;font-size:13px;color:#000;letter-spacing:0.200px;">Telephone</span>
<span class="t u" style="left:1063.60px;top:679.00px;font-size:14px;color:#000;letter-spacing:0.062px;">&lt;user&gt;@example</span>
<span class="t v" style="left:1385.00px;top:679.00px;font-size:12.8px;color:#000;font-weight:bold;letter-spacing:0.600px;">57</span>
<i class="tri" style="left:1235px;top:680px"></i>
<span class="t v" style="left:720.50px;top:699.00px;font-size:13px;color:#000;letter-spacing:0.080px;">Maintenance</span>
<span class="t u" style="left:1063.60px;top:699.00px;font-size:14px;color:#000;letter-spacing:0.062px;">&lt;user&gt;@example</span>
<span class="t v" style="left:1375.90px;top:699.00px;font-size:12.8px;color:#000;font-weight:bold;letter-spacing:0.350px;">258</span>
<i class="tri" style="left:1235px;top:700px"></i>
<span class="t v" style="left:722.00px;top:719.00px;font-size:13px;color:#000;letter-spacing:0.300px;">Travel</span>
<span class="t u" style="left:1063.60px;top:718.00px;font-size:14px;color:#000;letter-spacing:0.062px;">&lt;user&gt;@example</span>
<span class="t v" style="left:1362.20px;top:719.00px;font-size:12.8px;color:#000;font-weight:bold;letter-spacing:0.100px;">2,150</span>
<i class="tri" style="left:1235px;top:720px"></i>
<span class="t v" style="left:29.40px;top:739.00px;font-size:12.8px;color:#000080;font-weight:bold;letter-spacing:0.210px;">Subtotal for: JE_0102</span>
<span class="t v" style="left:1362.20px;top:739.00px;font-size:12.8px;color:#000080;font-weight:bold;letter-spacing:0.100px;">2,675</span>
<i class="tri" style="left:1235px;top:740px"></i>
<span class="t v" style="left:1534.40px;top:739.00px;font-size:12.8px;color:#000080;font-weight:bold;letter-spacing:0.100px;">2,675</span>
<i class="tri" style="left:1407px;top:740px"></i>
<span class="t v" style="left:30.30px;top:759.00px;font-size:13px;color:#000;letter-spacing:0.167px;">JE_0103</span>
<span class="t v" style="left:201.20px;top:759.00px;font-size:13px;color:#000;letter-spacing:0.180px;width:168.80px;overflow:hidden;">Allocation Journal - reclass</span>
<span class="t v" style="left:373.10px;top:759.00px;font-size:13px;color:#000;letter-spacing:0.022px;">Allocation</span>
<span class="t v" style="left:545.50px;top:759.00px;font-size:13px;color:#000;letter-spacing:0.141px;width:172.50px;overflow:hidden;">WestAdmin - West Administration</span>
<span class="t v" style="left:720.50px;top:759.00px;font-size:13px;color:#000;letter-spacing:0.125px;">Legal</span>
<span class="t v" style="left:1534.40px;top:759.00px;font-size:12.8px;color:#000;font-weight:bold;letter-spacing:0.100px;">2,450</span>
<i class="tri" style="left:1407px;top:760px"></i>
<span class="t v" style="left:545.50px;top:779.00px;font-size:13px;color:#000;letter-spacing:0.433px;">WestSales - West Sales</span>
<span class="t v" style="left:720.50px;top:779.00px;font-size:13px;color:#000;letter-spacing:0.125px;">Legal</span>
<span class="t v" style="left:1362.20px;top:779.00px;font-size:12.8px;color:#000;font-weight:bold;letter-spacing:0.100px;">1,250</span>
<i class="tri" style="left:1235px;top:780px"></i>
<span class="t v" style="left:545.50px;top:799.00px;font-size:13px;color:#000;letter-spacing:0.364px;width:172.50px;overflow:hidden;">WestProduction - West Production</span>
<span class="t v" style="left:720.50px;top:799.00px;font-size:13px;color:#000;letter-spacing:0.125px;">Legal</span>
<span class="t v" style="left:1362.20px;top:799.00px;font-size:12.8px;color:#000;font-weight:bold;letter-spacing:0.100px;">1,200</span>
<i class="tri" style="left:1235px;top:800px"></i>
<span class="t v" style="left:29.40px;top:819.00px;font-size:12.8px;color:#000080;font-weight:bold;letter-spacing:0.210px;">Subtotal for: JE_0103</span>
<span class="t v" style="left:1362.20px;top:819.00px;font-size:12.8px;color:#000080;font-weight:bold;letter-spacing:0.100px;">2,450</span>
<i class="tri" style="left:1235px;top:820px"></i>
<span class="t v" style="left:1534.40px;top:819.00px;font-size:12.8px;color:#000080;font-weight:bold;letter-spacing:0.100px;">2,450</span>
<i class="tri" style="left:1407px;top:820px"></i>
<div class="r" style="left:1235px;top:840px;width:4px;height:1px;background:#107c10;"></div>
<div class="r" style="left:369px;top:538px;width:175px;height:22px;border:2px solid #217346;box-sizing:border-box;"></div>
<div class="r" style="left:539px;top:556px;width:7px;height:7px;background:#fff;"></div>
<div class="r" style="left:540px;top:557px;width:5px;height:5px;background:#217346;"></div>
<div class="r" style="left:1579px;top:219px;width:2px;height:622px;background:#fff;"></div>
<div class="r" style="left:1581px;top:219px;width:1px;height:622px;background:#a0a0a0;"></div>
<div class="r" style="left:1px;top:841px;width:1581px;height:1px;background:#ababab;"></div>
<div class="r" style="left:1585px;top:201px;width:15px;height:640px;background:#dadada;"></div>
<div class="r" style="left:1585px;top:201px;width:15px;height:15px;background:#fff;border:1px solid #ababab;box-sizing:border-box;"></div>
<svg class="r" style="left:1588px;top:205px" width="9" height="6"><path d="M0.5 5.5L4.5 1L8.5 5.5Z" fill="#777"/></svg>
<div class="r" style="left:1585px;top:216px;width:15px;height:359px;background:#fff;border:1px solid #ababab;box-sizing:border-box;"></div>
<div class="r" style="left:1585px;top:827px;width:15px;height:14px;background:#fff;border:1px solid #ababab;box-sizing:border-box;"></div>
<svg class="r" style="left:1588px;top:832px" width="9" height="6"><path d="M0.5 0.5L4.5 5L8.5 0.5Z" fill="#777"/></svg>
<div class="r" style="left:1px;top:842px;width:1601px;height:27px;background:#e6e6e6;"></div>
<div class="r" style="left:101px;top:841px;width:114px;height:23px;background:#fff;"></div>
<div class="r" style="left:101px;top:842px;width:1px;height:22px;background:#b4b4b4;"></div>
<div class="r" style="left:214px;top:842px;width:1px;height:22px;background:#b4b4b4;"></div>
<div class="r" style="left:101px;top:864px;width:114px;height:2px;background:#217346;"></div>
<span class="t u" style="left:112.70px;top:845.00px;color:#217346;font-weight:bold;letter-spacing:0.523px;">JournalDetails</span>
<span class="t u" style="left:226.40px;top:845.00px;letter-spacing:0.080px;">Sheet1</span>
<div class="r" style="left:278px;top:846px;width:1px;height:19px;background:#ababab;"></div>
<svg class="r" style="left:311px;top:846px" width="18" height="18"><circle cx="9" cy="9" r="7.6" fill="none" stroke="#666" stroke-width="1.1"/><path d="M9 5v8M5 9h8" stroke="#555" stroke-width="1.6"/></svg>
<svg class="r" style="left:27px;top:850px" width="40" height="10"><path d="M5 1.5L1.5 5L5 8.5Z M31 1.5L34.5 5L31 8.5Z" fill="#c4c4c4"/></svg>
<svg class="r" style="left:962px;top:848px" width="4" height="15"><circle cx="2" cy="2.5" r="1" fill="#999"/><circle cx="2" cy="7" r="1" fill="#999"/><circle cx="2" cy="11.5" r="1" fill="#999"/></svg>
<div class="r" style="left:979px;top:848px;width:603px;height:15px;background:#cdcdcd;"></div>
<div class="r" style="left:979px;top:848px;width:15px;height:15px;background:#fff;border:1px solid #ababab;box-sizing:border-box;"></div>
<svg class="r" style="left:983px;top:851px" width="6" height="9"><path d="M5.5 0.5L1 4.5L5.5 8.5Z" fill="#777"/></svg>
<div class="r" style="left:994px;top:848px;width:396px;height:15px;background:#fff;border:1px solid #ababab;box-sizing:border-box;"></div>
<div class="r" style="left:1567px;top:848px;width:15px;height:15px;background:#fff;border:1px solid #ababab;box-sizing:border-box;"></div>
<svg class="r" style="left:1572px;top:851px" width="6" height="9"><path d="M0.5 0.5L5 4.5L0.5 8.5Z" fill="#777"/></svg>
<div class="r" style="left:1px;top:869px;width:1601px;height:1px;background:#c6c6c6;"></div>
<div class="r" style="left:1px;top:870px;width:1601px;height:20px;background:#f1f1f1;"></div>
<span class="t u" style="left:8.50px;top:869.00px;font-size:11px;color:#555;letter-spacing:-0.125px;">Ready</span>
<div class="r" style="left:1300px;top:870px;width:38px;height:20px;background:#c8c8c8;"></div>
<svg class="r" style="left:1312px;top:873px" width="14" height="14" viewBox="0 0 14 14" ><path d="M1 1H12.6V12.6H1Z M1 4.9H12.6M1 8.7H12.6M4.9 1V12.6M8.7 1V12.6" fill="none" stroke="#696969" stroke-width="1.1"/></svg>
<svg class="r" style="left:1350px;top:873px" width="14" height="14" viewBox="0 0 14 14" ><path d="M0.8 0.8H13V12.6H0.8Z" fill="none" stroke="#696969" stroke-width="1.1"/><path d="M3.6 3.4H10.2V10.2H3.6Z" fill="none" stroke="#696969" stroke-width="1"/><path d="M5 5.6H8.8M5 7.8H8.8" stroke="#696969" stroke-width="0.9"/></svg>
<svg class="r" style="left:1388px;top:873px" width="15" height="14" viewBox="0 0 15 14" ><path d="M0.8 0.8H13.6V12.6H0.8Z" fill="none" stroke="#696969" stroke-width="1.1"/><path d="M4 0.8V5.6H9.4V0.8" fill="none" stroke="#696969" stroke-width="1.1"/></svg>
<svg class="r" style="left:1418px;top:878px" width="8" height="3" viewBox="0 0 8 3" ><path d="M0.6 1.5H6.6" stroke="#595959" stroke-width="1.8"/></svg>
<svg class="r" style="left:1429px;top:879px" width="100" height="1" viewBox="0 0 100 1" ><rect x="0" y="0" width="100" height="1" fill="#8c8c8c"/></svg>
<svg class="r" style="left:1477px;top:874px" width="4" height="11" viewBox="0 0 4 11" ><rect x="0" y="0" width="4" height="11" fill="#666"/></svg>
<svg class="r" style="left:1532px;top:875px" width="10" height="10" viewBox="0 0 10 10" ><path d="M1 4.6H9M5 0.6V8.6" stroke="#595959" stroke-width="1.7"/></svg>
<span class="t u" style="left:1557.00px;top:869.00px;font-size:11px;color:#555;letter-spacing:-0.500px;">100%</span>
<div class="r" style="left:0px;top:60px;width:1px;height:832px;background:#217346;"></div>
<div class="r" style="left:1603px;top:60px;width:1px;height:832px;background:#217346;"></div>
<div class="r" style="left:0px;top:891px;width:1604px;height:1px;background:#217346;"></div>
<div class="r" style="left:1602px;top:60px;width:1px;height:831px;background:#dcefe3;"></div>
<div class="r" style="left:1px;top:153px;width:1px;height:737px;background:#e3f1e8;"></div>
<div class="r" style="left:1px;top:890px;width:1602px;height:1px;background:#dcefe3;"></div>
</div></body></html>
